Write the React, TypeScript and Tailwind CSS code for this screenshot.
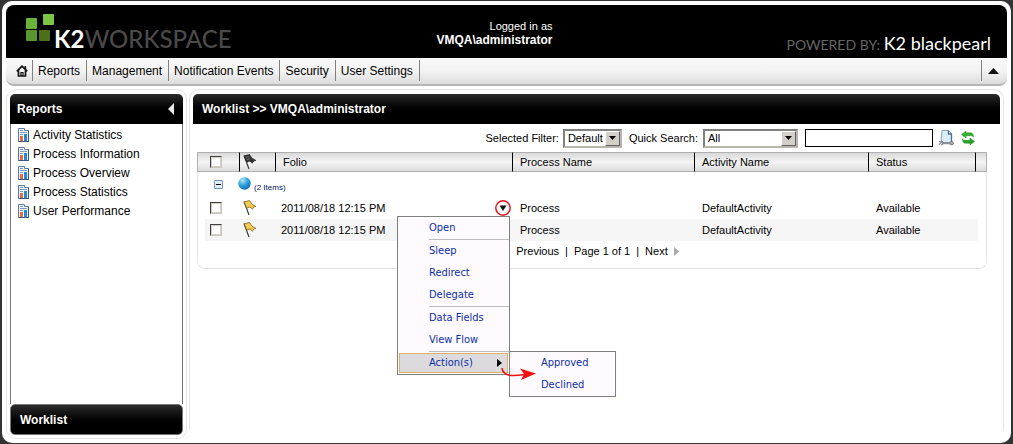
import React, { useState } from 'react';

const navItems = ['Reports', 'Management', 'Notification Events', 'Security', 'User Settings'];
const reports = ['Activity Statistics', 'Process Information', 'Process Overview', 'Process Statistics', 'User Performance'];
const rows = [
    { id: 1, folio: '2011/08/18 12:15 PM', process: 'Process', activity: 'DefaultActivity', status: 'Available', menu: true },
    { id: 2, folio: '2011/08/18 12:15 PM', process: 'Process', activity: 'DefaultActivity', status: 'Available', menu: false },
];
const menuGroups = [['Open'], ['Sleep', 'Redirect', 'Delegate'], ['Data Fields', 'View Flow']];

export default function App() {
    return (
        <div className="min-h-screen flex flex-col bg-[#333333] pt-px px-[2px] pb-px font-['Liberation_Sans',Arial,sans-serif] text-[12px] leading-[14px] text-black">
            <div className="flex-1 flex flex-col bg-white rounded-[10px] p-1">
                <Header />
                <NavBar />
                <div className="flex-1 flex gap-[2px] mt-[3px]">
                    <Sidebar />
                    <Worklist />
                </div>
            </div>
        </div>
    );
}

function Header() {
    return (
        <header className="bg-black rounded-t-[8px] h-[53px] flex justify-between">
            <div className="flex flex-1 pl-5 pt-[9px]">
                <svg width="28" height="28" viewBox="0 0 28 28" aria-hidden="true">
                    <rect x="0" y="4" width="11" height="11" rx="1" fill="#69b33b" />
                    <rect x="17" y="0" width="11" height="11" rx="1" fill="#7cc646" />
                    <rect x="0" y="16" width="11" height="11" rx="1" fill="#5a9632" />
                    <rect x="13" y="16" width="11" height="11" rx="1" fill="#4c7018" />
                </svg>
                <div className="pt-[12px] font-['Lato',sans-serif] text-[24px] leading-[26px] font-medium text-[#4a4a4a]">
                    <span className="font-bold text-white">K2</span>WORKSPACE
                </div>
            </div>
            <div className="pt-[14px] pr-7 text-right text-white text-[11px] leading-[14px]">
                <div>Logged in as</div>
                <div className="font-bold text-[12px]">VMQA\administrator</div>
            </div>
            <div className="flex-1 pr-4 pt-[28px] text-right font-['Lato',sans-serif] text-[14px] leading-5 text-[#666666]">
                POWERED BY: <span className="text-white text-[18px]">K2 blackpearl</span>
            </div>
        </header>
    );
}

function NavBar() {
    return (
        <nav className="flex h-7 pt-[2px] pb-[3px] border-b-2 border-[#b5b5b5] rounded-b-[8px] bg-linear-to-b from-[#f9f9f9] via-[#f3f3f3] to-[#dcdcdc]">
            <a href="#home" aria-label="Home" className="w-[27px] flex items-center justify-end pr-1 border-r border-[#808080]">
                <svg width="12" height="12" viewBox="0 0 12 12" fill="none" stroke="#111">
                    <path d="M0.800 6.300 L6 1.200 L11.200 6.300" strokeWidth="1.800" />
                    <path d="M2.500 5.500 V11 H9.500 V5.500 M9.300 4 V1" strokeWidth="1.700" />
                    <path d="M5 11 V7.500 H7 V11" strokeWidth="1.200" />
                </svg>
            </a>
            {navItems.map(item => (
                <a key={item} href={`#${item}`} className="flex items-center pl-[5px] pr-[6px] border-r border-[#808080]">{item}</a>
            ))}
            <button aria-label="Collapse header" className="ml-auto w-[26px] pr-[3px] flex items-center justify-center border-l border-[#808080]">
                <svg width="11" height="6" viewBox="0 0 11 6"><path d="M0 6 L5.500 0 L11 6Z" fill="#111" /></svg>
            </button>
        </nav>
    );
}

function Sidebar() {
    return (
        <aside className="w-[181px] shrink-0 flex flex-col border border-[#e4e4e4] rounded-[10px] p-[3px] pt-1">
            <div className="h-[30px] pl-[7px] pr-[9px] flex items-center justify-between rounded-t-[5px] bg-linear-to-b from-[#2c2c2c] to-black to-70% text-white">
                <h2 className="font-bold">Reports</h2>
                <button aria-label="Collapse sidebar">
                    <svg width="6" height="12" viewBox="0 0 6 12"><path d="M6 0 V12 L0 6Z" fill="#e8e8e8" /></svg>
                </button>
            </div>
            <ul className="flex-1 border-x border-[#777777] pt-px pl-[7px]">
                {reports.map(name => (
                    <li key={name} className="h-[19px]">
                        <a href={`#${name}`} className="h-full flex items-center gap-1">
                            <ReportIcon />
                            {name}
                        </a>
                    </li>
                ))}
            </ul>
            <button className="h-[31px] pl-[9px] text-left font-bold text-white rounded-[5px] border border-[#777777] bg-linear-to-b from-[#2c2c2c] to-black to-80%">
                Worklist
            </button>
        </aside>
    );
}

function Worklist() {
    return (
        <main className="flex-1 min-w-0 mr-[3px] mb-2 flex flex-col border border-b-0 border-[#e4e4e4] rounded-t-[10px] px-[3px] pt-1">
            <h1 className="h-[30px] pl-[9px] flex items-center font-bold rounded-t-[5px] bg-linear-to-b from-[#2c2c2c] to-black to-70% text-white">
                Worklist &gt;&gt; VMQA\administrator
            </h1>
            <Toolbar />
            <div className="ml-1 mr-[13px]">
                <WorklistTable />
                <Pager />
            </div>
        </main>
    );
}

function Toolbar() {
    return (
        <div className="h-7 pr-[25px] flex items-center justify-end text-[11px]">
            <label htmlFor="filter" className="mr-1">Selected Filter:</label>
            <DropDown id="filter" value="Default" width="w-[59px]" />
            <label htmlFor="quick" className="ml-[7px] mr-[5px]">Quick Search:</label>
            <DropDown id="quick" value="All" width="w-[95px]" />
            <input type="text" aria-label="Search text" className="ml-[7px] w-32 h-[18px] px-1 border border-black bg-white" />
            <button aria-label="Advanced search" className="ml-[5px]"><SearchPageIcon /></button>
            <button aria-label="Refresh" className="ml-[7px]"><RefreshIcon /></button>
        </div>
    );
}

function DropDown({ id, value, width }: { id: string, value: string, width: string }) {
    return (
        <div className={`relative ${width}`}>
            <select id={id} className="block w-full h-[19px] pl-[3px] appearance-none bg-white border-2 border-t-[#808080] border-l-[#808080] border-r-[#b8b5ae] border-b-[#b8b5ae] text-[11px] leading-[14px]">
                <option>{value}</option>
            </select>
            <span className="pointer-events-none absolute right-[2px] top-[2px] w-[15px] h-[15px] flex items-center justify-center bg-[#d4d0c8] border border-t-white border-l-white border-r-[#606060] border-b-[#606060]">
                <svg width="7" height="4" viewBox="0 0 7 4"><path d="M0 0 H7 L3.500 4Z" fill="#000" /></svg>
            </span>
        </div>
    );
}

function WorklistTable() {
    const head = 'h-[20px] pl-[7px] text-left font-normal border-y border-[#b0b0b0]';
    return (
        <table className="w-full table-fixed border-separate border-spacing-0 text-[11px] leading-[14px]">
            <colgroup>
                <col className="w-2" />
                <col className="w-[34px]" />
                <col className="w-9" />
                <col />
                <col className="w-[182px]" />
                <col className="w-[174px]" />
                <col className="w-[107px]" />
                <col className="w-3" />
            </colgroup>
            <thead>
                <tr className="bg-linear-to-b from-[#d6d6d6] via-[#f4f4f4] to-[#dadada]">
                    <th className="border-y border-l border-[#b0b0b0]" />
                    <th className="border-y border-[#b0b0b0] pl-[5px]"><Tick label="Select all" /></th>
                    <th className="border-y border-[#b0b0b0] border-l border-l-black pl-[3px]"><Flag color="#333333" edge="#222222" label="Priority" /></th>
                    <th className={`${head} border-l border-l-black`}>Folio</th>
                    <th className={`${head} border-l border-l-black`}>Process Name</th>
                    <th className={`${head} border-l border-l-black`}>Activity Name</th>
                    <th className={`${head} border-l border-l-black`}>Status</th>
                    <th className="border-y border-r border-[#b0b0b0] border-l border-l-black" />
                </tr>
            </thead>
            <tbody>
                <tr>
                    <td className="border-l border-[#e4e4e4]" />
                    <td className="h-[25px] pl-[9px]">
                        <button aria-label="Collapse group" className="flex items-center justify-center w-[9px] h-[9px] rounded-[1px] border border-[#6b93c4] bg-[#e3eefa]">
                            <span className="w-[5px] h-px bg-black" />
                        </button>
                    </td>
                    <td colSpan={5}>
                        <div className="flex items-start -ml-px">
                            <svg width="13" height="17" viewBox="0 0 13 17" aria-hidden="true">
                                <defs>
                                    <radialGradient id="orb" cx="0.350" cy="0.250" r="0.800">
                                        <stop offset="0" stopColor="#b5e6fa" />
                                        <stop offset="0.500" stopColor="#2fa3dc" />
                                        <stop offset="1" stopColor="#0e6cab" />
                                    </radialGradient>
                                </defs>
                                <circle cx="6.500" cy="7.500" r="6.200" fill="url(#orb)" />
                            </svg>
                            <span className="ml-[3px] pt-[7px] text-[8px] leading-[10px] text-[#001a66]">(2 Items)</span>
                        </div>
                    </td>
                    <td className="border-r border-[#e4e4e4]" />
                </tr>
                {rows.map(row => <WorkRow key={row.id} row={row} />)}
            </tbody>
        </table>
    );
}

function WorkRow({ row }: { row: any }) {
    const stripe = row.menu ? '' : 'bg-[#f5f5f5]';
    return (
        <tr>
            <td className="h-[22px] border-l border-[#e4e4e4]" />
            <td className={`${stripe} pl-[5px]`}><Tick label={`Select ${row.folio}`} /></td>
            <td className={`${stripe} pl-1`}><Flag color="#f3c544" edge="#6b5520" label="Normal" /></td>
            <td className={`${stripe} pl-[6px]`}>
                <div className="relative flex items-center justify-between">
                    {row.folio}
                    {row.menu && <ActionMenu />}
                </div>
            </td>
            <td className={`${stripe} pl-2`}>{row.process}</td>
            <td className={`${stripe} pl-2`}>{row.activity}</td>
            <td className={`${stripe} pl-2`}>{row.status}</td>
            <td className="border-r border-[#e4e4e4]"><div className={`${stripe} w-[3px] h-[22px]`} /></td>
        </tr>
    );
}

function ActionMenu() {
    const [open, setOpen] = useState(true);
    const item = 'block w-full h-[22px] pl-[31px] text-left';
    return (
        <>
            <button aria-label="Item actions" onClick={() => setOpen(!open)} className="w-4 h-4 mr-px shrink-0">
                <svg width="16" height="16" viewBox="0 0 16 16">
                    <circle cx="8" cy="8" r="7.200" fill="#fff" stroke="#e8141c" strokeWidth="1.500" />
                    <path d="M4.500 5.500 H11.500 L8 11Z" fill="#111" />
                </svg>
            </button>
            {open && (
                <div className="absolute z-10 top-4 right-[2px] w-[113px] border border-[#808080] bg-[#fefaff] font-['DejaVu_Sans_Condensed','DejaVu_Sans',Tahoma,sans-serif] text-[11px] leading-[22px] text-[#0b2fa5]">
                    {menuGroups.map(group => (
                        <div key={group[0]}>
                            {group.map(name => <button key={name} className={item}>{name}</button>)}
                            <div className="ml-[31px] h-px bg-[#bdbdbd]" />
                        </div>
                    ))}
                    <div className="relative p-px">
                        <button className="w-full h-5 pl-[30px] pr-[5px] flex items-center justify-between bg-[#dddadd] border border-[#d8b469]">
                            <span className="-ml-px">Action(s)</span>
                            <svg width="5" height="8" viewBox="0 0 5 8"><path d="M0 0 V8 L5 4Z" fill="#000" /></svg>
                        </button>
                        <div className="absolute left-full -top-px w-[107px] border border-[#808080] bg-[#fefaff]">
                            <button className={item}>Approved</button>
                            <button className={item}>Declined</button>
                        </div>
                        <svg className="absolute left-[103px] top-4" width="36" height="14" viewBox="0 0 36 14" fill="none" aria-hidden="true">
                            <path d="M1 0 C2 9 12 8 24 6.500" stroke="#f01010" strokeWidth="1.600" />
                            <path d="M35 5.500 L19 0.500 L23 6 L20 12Z" fill="#f01010" />
                        </svg>
                    </div>
                </div>
            )}
        </>
    );
}

function Pager() {
    return (
        <div className="h-[28px] pt-[3px] flex justify-center items-start gap-[6px] text-[11px] leading-[14px] border border-t-0 border-[#e4e4e4] rounded-b-[8px]">
            <svg className="mt-[3px]" width="5" height="9" viewBox="0 0 5 9"><path d="M5 0 V9 L0 4.500Z" fill="#a8a8a8" /></svg>
            <button>Previous</button>
            <span>|</span>
            <span>Page 1 of 1</span>
            <span>|</span>
            <button>Next</button>
            <svg className="mt-[3px]" width="5" height="9" viewBox="0 0 5 9"><path d="M0 0 V9 L5 4.500Z" fill="#a8a8a8" /></svg>
        </div>
    );
}

function Tick({ label }: { label: string }) {
    return (
        <input type="checkbox" aria-label={label} className="block w-3 h-3 appearance-none bg-white border border-t-[#404040] border-l-[#404040] border-r-[#c8c5be] border-b-[#c8c5be] outline outline-[#d4d0c8] -outline-offset-2 checked:bg-gray-500" />
    );
}

function Flag({ color, edge, label }: { color: string, edge: string, label: string }) {
    return (
        <svg className="block" width="14" height="16" viewBox="0 0 14 16" role="img" aria-label={label}>
            <path d="M1 1.500 L6 15" stroke="#333" strokeWidth="1.100" />
            <path d="M1.200 1.800 L6.500 0.500 C7.500 2 8.500 3.500 9.500 4.500 L13 6.500 C11 6.300 10.500 7.500 9.300 9.300 C8.300 8.200 7.500 7.200 6.200 7.200 C5 7.200 4.500 7.800 3.800 8.500Z" fill={color} stroke={edge} strokeWidth="0.700" />
            <path d="M3 3.500 L6 2.700 M4 5.500 L7 4.700" stroke="#ffffff" strokeOpacity="0.400" strokeWidth="0.800" />
        </svg>
    );
}

function ReportIcon() {
    return (
        <svg width="11" height="14" viewBox="0 0 11 14" aria-hidden="true">
            <path d="M0.500 0.500 H6.500 V2.500 H10.500 V13.500 H0.500Z" fill="#eef4fb" stroke="#5f7ba0" />
            <path d="M10.500 2.500 V13.500 H0.500" fill="none" stroke="#3b5680" />
            <path d="M2 2.500 H5 M2 4.500 H9 M2 6.500 H5" stroke="#7d98ba" />
            <rect x="2" y="8" width="3" height="5" fill="#f0683a" />
            <rect x="6" y="6" width="3" height="7" fill="#2389df" />
            <path d="M5.500 7 V13" stroke="#ffffff" />
        </svg>
    );
}

function SearchPageIcon() {
    return (
        <svg className="block" width="16" height="16" viewBox="0 0 16 16">
            <path d="M4 0.500 H10.500 L13.500 3.500 V12.500 H3Z" fill="#dcecf7" stroke="#8ea6ba" />
            <path d="M10.500 0.500 V4 H13.500 V12" fill="none" stroke="#4c6e90" strokeWidth="1.300" />
            <path d="M4 13.200 H13" stroke="#8a8f96" strokeWidth="2" />
            <path d="M1 11.300 L3.300 12.500 L1 14.700 M3 11 C5.500 11 5.500 15 3 15.200" fill="none" stroke="#8a8f96" strokeWidth="1.300" />
            <ellipse cx="13.500" cy="13.200" rx="2" ry="1.700" fill="#a4a8ae" stroke="#777c84" strokeWidth="0.800" />
        </svg>
    );
}

function RefreshIcon() {
    return (
        <svg className="block" width="14" height="14" viewBox="0 0 14 14">
            <path d="M5 0 V1.800 H9.500 C11.500 1.800 12.500 3.500 12.500 6 C11.500 4.800 10.500 4.700 9 4.700 H5 V7 L0.500 3.500Z" fill="#35b235" stroke="#1f8f1f" strokeWidth="0.500" />
            <path d="M9 14 V12.200 H4.500 C2.500 12.200 1.500 10.500 1.500 8 C2.500 9.200 3.500 9.300 5 9.300 H9 V7 L13.500 10.500Z" fill="#2aa02a" stroke="#1f8f1f" strokeWidth="0.500" />
        </svg>
    );
}
